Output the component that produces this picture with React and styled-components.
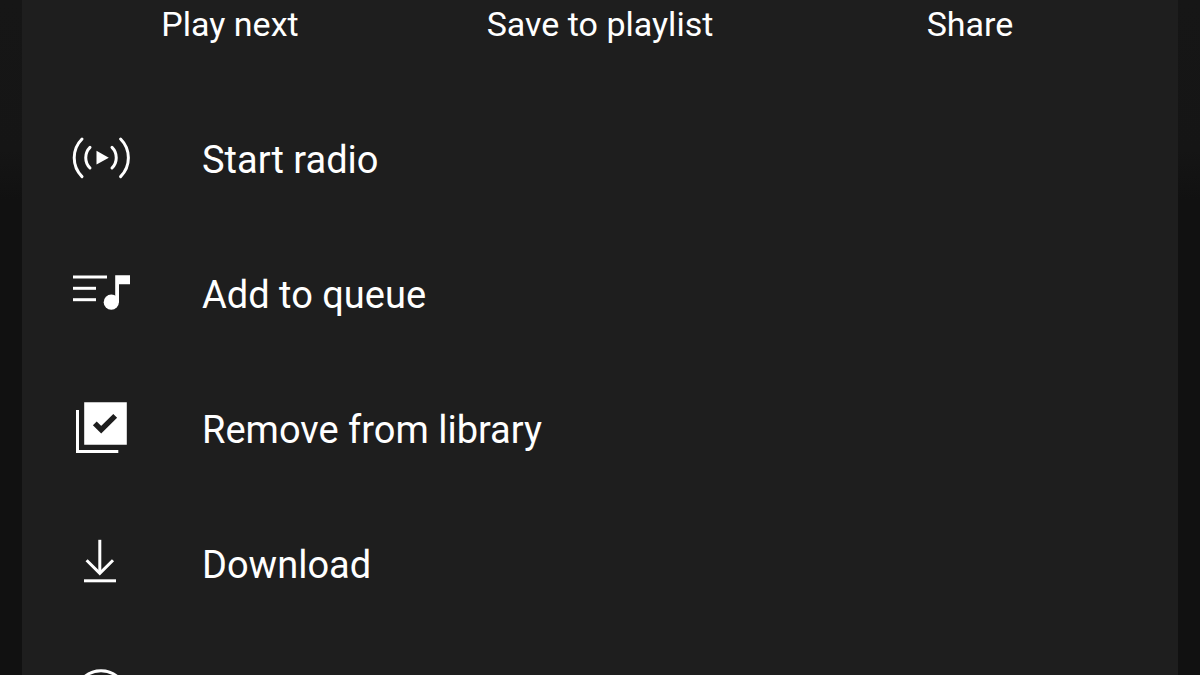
import React from 'react'
import styled, { createGlobalStyle } from 'styled-components';

const menuItems = [
    { label: "Start radio", icon: <RadioIcon /> },
    { label: "Add to queue", icon: <QueueIcon /> },
    { label: "Remove from library", icon: <LibraryIcon /> },
    { label: "Download", icon: <DownloadIcon /> },
];

export default function App() {
    return (
    <>
      <GlobalStyle />
      <Page>
        <Sheet>
          <QuickActions>
            <QuickButton type="button">Play next</QuickButton>
            <QuickButton type="button">Save to playlist</QuickButton>
            <QuickButton type="button">Share</QuickButton>
          </QuickActions>
          <Menu>
            {menuItems.map(({ label, icon }) => (
              <li key={label}>
                <MenuButton type="button">
                  {icon}
                  <span>{label}</span>
                </MenuButton>
              </li>
            ))}
            <li>
              <MenuButton type="button" aria-label="Album">
                <AlbumIcon />
              </MenuButton>
            </li>
          </Menu>
        </Sheet>
      </Page>
    </>
  )
}

function RadioIcon() {
    return (
    <Icon viewBox="0 0 64 65" aria-hidden="true">
      <g fill="none" stroke="currentColor" strokeWidth="3" strokeLinecap="round">
        <path d="M13 12A26.6 26.6 0 0 0 13 49.6" />
        <path d="M21 20.4A14.6 14.6 0 0 0 21 41" />
        <path d="M43 20.4A14.6 14.6 0 0 1 43 41" />
        <path d="M51.6 12A26.6 26.6 0 0 1 51.6 49.6" />
      </g>
      <path d="M27.5 23.8V37.6L39.8 30.7Z" fill="currentColor" />
    </Icon>
  )
}

function QueueIcon() {
    return (
    <Icon viewBox="0 0 64 65" aria-hidden="true">
      <g fill="currentColor">
        <path d="M4 13.5H38V16.5H4Z" />
        <path d="M4 24.8H27V27.8H4Z" />
        <path d="M4 36.2H27V39.2H4Z" />
        <path d="M46.2 13.3H61V22.2H50V40.3H46.2Z" />
        <circle cx="42.3" cy="40.2" r="7.6" />
      </g>
    </Icon>
  )
}

function LibraryIcon() {
    return (
    <Icon viewBox="0 0 64 65" aria-hidden="true">
      <path d="M15.2 5.2H57.8V47.7H15.2Z" fill="currentColor" />
      <path d="M8.5 13V54.5H49.3" fill="none" stroke="currentColor" strokeWidth="3" />
      <path d="M25.8 26.4L32.2 32.7L46.2 18.8" fill="none" stroke="#1e1e1e" strokeWidth="5.4" />
    </Icon>
  )
}

function DownloadIcon() {
    return (
    <Icon viewBox="0 0 64 65" aria-hidden="true">
      <g fill="none" stroke="currentColor" strokeWidth="3">
        <path d="M30.8 7.8V41" />
        <path d="M17.6 28.2L30.8 41.4L44 28.2" />
        <path d="M15 48.8H47" />
      </g>
    </Icon>
  )
}

function AlbumIcon() {
    return (
    <Icon viewBox="0 0 64 65" aria-hidden="true">
      <g fill="none" stroke="currentColor" strokeWidth="3">
        <circle cx="32" cy="29.2" r="25.5" />
        <circle cx="32" cy="29.2" r="8" />
      </g>
    </Icon>
  )
}

const GlobalStyle = createGlobalStyle`
  * {
    box-sizing: border-box;
  }
  body {
    margin: 0;
    background: #111111;
  }
`;

const Page = styled.div`
  height: 100vh;
  overflow: hidden;
  padding: 0 22px;
  background: linear-gradient(#161616, #151515 150px, #111111 200px);
  color: #ffffff;
  font-family: Roboto, sans-serif;
`;

const Sheet = styled.main`
  min-height: 100%;
  background: #1e1e1e;
`;

const QuickActions = styled.div`
  display: grid;
  grid-template-columns: repeat(3, 1fr);
  height: 92px;
  padding: 0 23px;
  align-items: start;
`;

const QuickButton = styled.button`
  border: 0;
  padding: 4px 0;
  background: none;
  color: inherit;
  font-family: inherit;
  font-size: 34px;
  line-height: 40px;
  cursor: pointer;
`;

const Menu = styled.ul`
  margin: 0;
  padding: 0;
  list-style: none;
`;

const MenuButton = styled.button`
  display: flex;
  align-items: center;
  gap: 69px;
  width: 100%;
  height: 135px;
  border: 0;
  padding: 0 47px;
  background: none;
  color: inherit;
  font-family: inherit;
  font-size: 38px;
  line-height: 48px;
  text-align: left;
  cursor: pointer;
`;

const Icon = styled.svg`
  flex: none;
  width: 64px;
  height: 65px;
`;
